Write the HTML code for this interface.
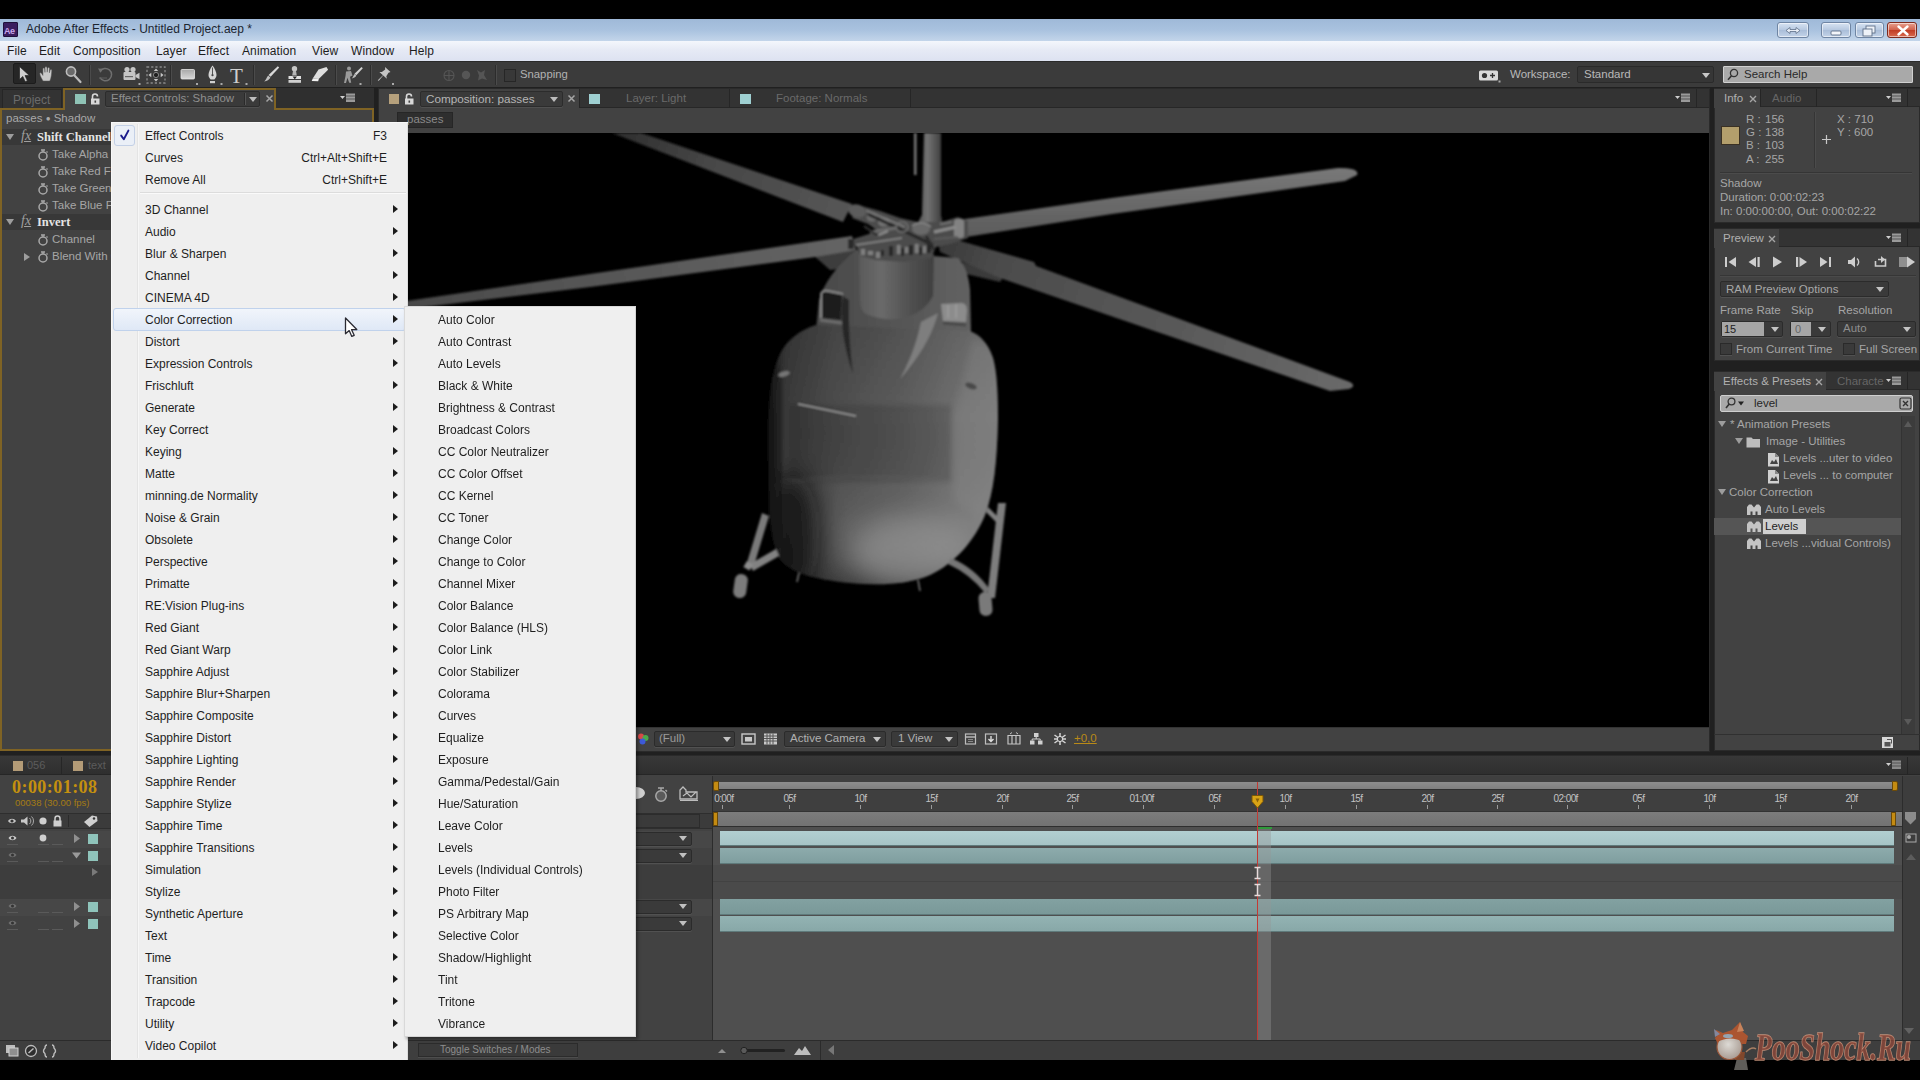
<!DOCTYPE html>
<html><head><meta charset="utf-8"><title>Adobe After Effects - Untitled Project.aep *</title>
<style>
*{box-sizing:border-box;margin:0;padding:0}
html,body{width:1920px;height:1080px;overflow:hidden;background:#000}
body{font-family:"Liberation Sans",sans-serif;font-size:12px;color:#b4b4b4;position:relative;-webkit-font-smoothing:antialiased}
.abs,div,span,i,svg{position:absolute}
#app{left:0;top:19px;width:1920px;height:1041px;background:#202020}
/* title + menubar */
#title{left:0;top:19px;width:1920px;height:22px;background:linear-gradient(#9fb9d8 0%,#a9c2df 50%,#c3d5ea 100%)}
#title .t{left:26px;top:3px;font-size:12.5px;color:#1c2530;white-space:nowrap;letter-spacing:-0.1px}
#menubar{left:0;top:41px;width:1920px;height:20px;background:linear-gradient(#f4f7fc 0%,#e6eaf5 45%,#dde2f1 100%)}
#menubar span{top:2px;font-size:13px;color:#1d1d1d;white-space:nowrap;letter-spacing:-0.2px}
#toolbar{left:0;top:61px;width:1920px;height:26px;background:#3b3b3b;border-top:1px solid #2a2a2a}
.panel{background:#424242}
.lbl{white-space:nowrap;color:#b9b9b9}
/* menus */
#mainmenu,#submenu{left:0;top:0;width:0;height:0}
#mainmenu .bg{left:111px;top:122px;width:297px;height:938px;background:#efefef;border-left:1px solid #d6d6d6;border-top:1px solid #fafafa}
.gutter{left:111px;top:122px;width:297px;height:938px;background:#efefef;box-shadow:inset 1px 1px 0 #f8f8f8, inset -1px 0 0 #dcdcdc}
.gutter:after{content:"";position:absolute;left:26px;top:2px;width:1px;height:934px;background:#e4e4e4;border-right:1px solid #f7f7f7}
.chk{left:114px;top:125px;width:21px;height:21px;background:#eaeff7;border:1px solid #c3d0e6;border-radius:3px}
.chk svg{left:0;top:0}
.mi{left:113px;width:293px;height:22px;font-size:12px;color:#1e1e1e;letter-spacing:0}
.mi span{left:32px;top:6px;white-space:nowrap}
.mi span.sc{left:auto;right:19px}
.mi .ar{left:280px;top:7.500px;width:0;height:0;border-left:5px solid #1c1c1c;border-top:4.5px solid transparent;border-bottom:4.5px solid transparent}
.mi.hl{background:linear-gradient(#f1f5fb,#dfe8f6);border:1px solid #c0d2ec;border-radius:3px;margin-top:1px;height:23px}
.mi.hl span{left:31px;top:4px}
.mi.hl .ar{left:279px;top:6px}
.sep{left:140px;top:192px;width:266px;height:1px;background:#dcdcdc;border-bottom:1px solid #fafafa;height:2px}
.gutter2{left:404px;top:306px;width:232px;height:731px;background:#efefef;box-shadow:inset 1px 1px 0 #d9d9d9, inset -1px -1px 0 #d4d4d4, 2px 2px 3px rgba(0,0,0,.35)}
.si{left:438px;height:22px;font-size:12px;color:#1e1e1e;white-space:nowrap;letter-spacing:0;padding-top:6px}
#wrap{left:0;top:0;width:1920px;height:1080px;overflow:hidden;filter:blur(.55px)}
</style></head><body>

<style>
.aeico{left:3px;top:3px;width:15px;height:15px;background:#3a1d5e;border:1px solid #20103a;border-radius:1px}
.aeico b{left:1px;top:1px;font-size:9px;color:#c9a7ea;letter-spacing:-.5px}
#title .t{font-size:12px;letter-spacing:0}
#menubar span{font-size:12px;letter-spacing:.1px;top:3px}
.wb{top:3px;height:16px;border:1px solid #6f85a3;border-radius:3px;background:linear-gradient(#d7e3f2,#b6c8e0 50%,#a9bdd8 50%,#c3d3e8);box-shadow:inset 0 0 0 1px rgba(255,255,255,.55)}
.wb svg{left:-1px;top:-1px}
.wb.close{background:linear-gradient(#e8a08f,#d0604a 50%,#c03a22 50%,#d8694f);border-color:#7d2a1d}
.tsel{left:13px;top:1px;width:23px;height:21px;background:#262626;border:1px solid #1c1c1c;border-radius:2px}
.dn{width:0;height:0;border-top:5px solid #c8c8c8;border-left:4px solid transparent;border-right:4px solid transparent}
</style>
<style>
.tabrow{background:#2f2f2f}
.tab.off{background:#333;border:1px solid #262626;border-bottom:none}
.dn.s{border-top:6px solid #9d9d9d;border-left:4.500px solid transparent;border-right:4.500px solid transparent}
.rt{width:0;height:0;border-left:6px solid #9d9d9d;border-top:4.500px solid transparent;border-bottom:4.500px solid transparent}
.fx{font-family:"Liberation Serif",serif;font-style:italic;font-size:14px;color:#9f9f9f;text-decoration:underline}
.efn{font-family:"Liberation Serif",serif;font-weight:bold;font-size:12.500px;color:#e4e4e4}
.pr{font-size:11.500px;color:#a6a6a6}
</style>
<style>
.dd{background:#3a3a3a;border:1px solid #2b2b2b;border-radius:2px;box-shadow:0 1px 0 #515151}
</style>
<style>
.rp{background:#424242;border:1px solid #2a2a2a}
.rtabs{background:#333;border-bottom:1px solid #282828}
.rtab.on{background:#424242}
.iv{font-size:11.500px;color:#a6a6a6}
.tr{font-size:11.500px;color:#a6a6a6}
.cb{width:12px;height:12px;background:#3a3a3a;border:1px solid #2a2a2a;box-shadow:0 1px 0 #515151}
</style>

<div id="wrap">
<div id="app"></div>
<div id="title"><div class="aeico"><b>Ae</b></div><div class="t">Adobe After Effects - Untitled Project.aep *</div>
<div class="wb" style="left:1777px;width:32px"><svg width="32" height="17" viewBox="0 0 32 17"><path d="M9 8.5l4-3v2h6v-2l4 3-4 3v-2h-6v2z" fill="#e9eef6" stroke="#5d6f88" stroke-width=".8"/></svg></div>
<div class="wb" style="left:1821px;width:30px"><svg width="30" height="17" viewBox="0 0 30 17"><rect x="10" y="9" width="10" height="4" rx="1" fill="#f2f5fa" stroke="#5d6f88" stroke-width=".9"/></svg></div>
<div class="wb" style="left:1855px;width:29px"><svg width="28" height="17" viewBox="0 0 28 17"><rect x="11" y="4" width="9" height="7" fill="#eef2f8" stroke="#5d6f88" stroke-width=".9"/><rect x="8" y="7" width="9" height="7" fill="#eef2f8" stroke="#5d6f88" stroke-width=".9"/></svg></div>
<div class="wb close" style="left:1887px;width:30px"><svg width="32" height="17" viewBox="0 0 32 17"><path d="M11.5 4.5l9 8M20.5 4.5l-9 8" stroke="#fff" stroke-width="2.4" stroke-linecap="round"/></svg></div>
</div>
<div id="menubar">
<span style="left:7px">File</span><span style="left:39px">Edit</span><span style="left:73px">Composition</span><span style="left:156px">Layer</span><span style="left:198px">Effect</span><span style="left:242px">Animation</span><span style="left:312px">View</span><span style="left:351px">Window</span><span style="left:409px">Help</span>
</div>
<div id="toolbar">
<div class="tsel"></div>
<svg style="left:0;top:0" width="640" height="25" viewBox="0 61 640 25">
<!-- arrow -->
<path d="M19.5 65.5v13l3.3-3 2.4 5.2 2.2-1-2.4-5.1 4.3-.2z" fill="#cfcfcf" stroke="#222" stroke-width=".7"/>
<!-- hand -->
<path d="M43 80c-1-2-3-5-3.2-7.2-.1-1 1.2-1.3 1.8-.4l1.3 2v-6.6c0-1.2 1.7-1.2 1.8 0l.3 3.6v-4.6c0-1.3 1.9-1.3 2 0l.2 4.4.4-3.8c.2-1.2 1.9-1 1.9.2l-.1 4.2.7-2.6c.3-1.1 1.8-.8 1.7.4-.2 3-.5 7.5-2 10.4z" fill="#c9c9c9" stroke="#555" stroke-width=".5"/>
<!-- zoom -->
<circle cx="71" cy="70.5" r="4.6" fill="#6a6a6a" stroke="#bdbdbd" stroke-width="1.6"/><path d="M74.5 74.5l6 6.5" stroke="#bdbdbd" stroke-width="2.2" stroke-linecap="round"/>
<path d="M89.5 64v20" stroke="#2c2c2c"/><path d="M90.5 64v20" stroke="#4b4b4b"/>
<!-- rotate -->
<path d="M100 70.5a6.2 6.2 0 1 1 0 6.2" fill="none" stroke="#6f6f6f" stroke-width="1.5"/><path d="M98 67.5l5 .3-2.4 4z" fill="#6f6f6f"/>
<path d="M99 77l8 0" stroke="#5e5e5e" stroke-width="1"/>
<!-- camera -->
<rect x="123.5" y="71" width="12" height="8" rx="1" fill="#c5c5c5"/><circle cx="127" cy="68.5" r="2.6" fill="#c5c5c5"/><circle cx="133" cy="68.5" r="2.6" fill="#c5c5c5"/><path d="M135.5 74l4-2.2v6.4l-4-2.2z" fill="#c5c5c5"/><rect x="125" y="75" width="8" height="1.2" fill="#666"/><rect x="138.5" y="82" width="2" height="2" fill="#aaa"/>
<!-- pan behind -->
<rect x="147" y="66" width="18" height="16" fill="none" stroke="#8a8a8a" stroke-width="1.3" stroke-dasharray="2.2 2"/><circle cx="156" cy="74" r="2.6" fill="#1e1e1e" stroke="#aaa" stroke-width=".7"/><path d="M156 67.5l2.2 2.6h-4.4zM156 80.5l2.2-2.6h-4.4zM148.5 74l2.8-2.2v4.4zM163.5 74l-2.8-2.2v4.4z" fill="#c8c8c8"/>
<path d="M170.5 64v20" stroke="#2c2c2c"/><path d="M171.5 64v20" stroke="#4b4b4b"/>
<!-- rect -->
<defs><linearGradient id="rg" x1="0" y1="0" x2="0" y2="1"><stop offset="0" stop-color="#a8a8a8"/><stop offset="1" stop-color="#d8d8d8"/></linearGradient></defs>
<rect x="181" y="68.5" width="13.5" height="9.5" rx="1" fill="url(#rg)" stroke="#e6e6e6" stroke-width=".8"/><rect x="196" y="82" width="2" height="2" fill="#aaa"/>
<!-- pen -->
<path d="M212.5 64.5c-2.2 3-4 6.5-4 9.5 0 2 1.4 3.7 2.2 4.6h3.6c.8-.9 2.2-2.600 2.200-4.600 0-3-1.800-6.500-4-9.500z" fill="#d6d6d6"/><path d="M212.500 66.500v7" stroke="#444" stroke-width=".9"/><circle cx="212.500" cy="74.200" r="1.100" fill="#444"/><rect x="210" y="80" width="5" height="2.200" fill="#d0d0d0"/><rect x="220.500" y="82" width="2" height="2" fill="#aaa"/>
<!-- T -->
<text x="230" y="81.500" font-family="Liberation Serif" font-size="21" fill="#cfcfcf">T</text><rect x="245.500" y="82" width="2" height="2" fill="#aaa"/>
<path d="M253.500 64v20" stroke="#2c2c2c"/><path d="M254.500 64v20" stroke="#4b4b4b"/>
<!-- brush -->
<path d="M277.800 65.200l1.400 1.300-8.600 9.300-2-1.800z" fill="#d8d8d8"/><path d="M268.200 74.500l2.200 2c-1 2.300-3.600 3.800-6.200 3.900 1.800-1.500 2.400-3.800 4-5.900z" fill="#c2c2c2"/>
<!-- stamp -->
<circle cx="294.500" cy="67.800" r="2.700" fill="#c6c6c6"/><path d="M293 70h3l.8 4.500h-4.600z" fill="#b5b5b5"/><rect x="288.500" y="75" width="12.500" height="3" fill="#e0e0e0"/><rect x="288.500" y="79" width="12.500" height="2.800" fill="#d0d0d0"/><path d="M292.500 75.500h4.500l-2.200 2.800z" fill="#222"/>
<!-- eraser -->
<path d="M318.500 68.500l8-2.600 1.600 2.800-9.400 9.300-6-.4z" fill="#dedede"/><path d="M312.800 77.500l6 .4-.6 2.400-6.500-.3z" fill="#f2f2f2"/>
<path d="M335.500 64v20" stroke="#2c2c2c"/><path d="M336.500 64v20" stroke="#4b4b4b"/>
<!-- roto -->
<circle cx="349" cy="67.500" r="2" fill="#9a9a9a"/><path d="M346 70.500l5-.5 1.500 4.500-2.500 1.200 1.200 6h-2l-1.800-5-1.400 5.200h-2l1.500-7z" fill="#9a9a9a"/><path d="M361.500 66l1.300 1.200-6.500 7-1.800-1.500z" fill="#d2d2d2"/><path d="M354.500 73l1.800 1.600c-.8 1.800-2.600 2.700-4.600 2.800 1.400-1.200 1.700-2.800 2.800-4.400z" fill="#bdbdbd"/><rect x="359.500" y="82" width="2" height="2" fill="#aaa"/>
<path d="M370.500 64v20" stroke="#2c2c2c"/><path d="M371.500 64v20" stroke="#4b4b4b"/>
<!-- pin -->
<path d="M385 66l5.500 5-2 .8-2.200 3.500.6 2.400-3.700-3.300-4.200 5-1.200.6.500-1.300 4.700-4.500-3.600-3.300 2.500.2 3.300-2.500z" fill="#c4c4c4"/><rect x="392" y="82" width="2" height="2" fill="#aaa"/>
<!-- dim icons -->
<g fill="none" stroke="#555" stroke-width="1.100"><circle cx="449" cy="74.500" r="5"/><path d="M449 69.500v10M444 74.500h10"/></g>
<circle cx="466" cy="74" r="4.200" fill="#555"/>
<path d="M477 69l4 2.500 4-2.500-1 5 3 5-5-1.500-4 2 1-5z" fill="#555"/>
<path d="M495.500 64v20" stroke="#2c2c2c"/><path d="M496.500 64v20" stroke="#4b4b4b"/>
<rect x="504.500" y="68.500" width="11" height="12" fill="#383838" stroke="#262626"/>
</svg>
<div class="lbl" style="left:520px;top:6px;font-size:11.3px;color:#b2b2b2">Snapping</div>
<!-- right side -->
<svg style="left:1476px;top:4px" width="30" height="20" viewBox="0 0 30 20"><rect x="3" y="4.500" width="19" height="10" rx="1.500" fill="#d9d9d9"/><circle cx="8.500" cy="9.500" r="2.600" fill="#333"/><path d="M14 9.500h5M16.500 7v5" stroke="#333" stroke-width="1.300"/><rect x="22.500" y="14.500" width="2" height="2" fill="#aaa"/></svg>
<div class="lbl" style="left:1510px;top:6px;font-size:11.5px">Workspace:</div>
<div style="left:1577px;top:4px;width:137px;height:17px;background:#363636;border:1px solid #2a2a2a;border-radius:2px"></div>
<div class="lbl" style="left:1584px;top:6px;font-size:11.5px">Standard</div>
<i class="dn" style="left:1702px;top:11px"></i>
<div style="left:1723px;top:4px;width:190px;height:17px;background:#a9a9a9;border:1px solid #d0d0d0;border-radius:1px"></div>
<svg style="left:1725px;top:5px" width="16" height="16" viewBox="0 0 16 16"><circle cx="9" cy="6" r="3.600" fill="none" stroke="#333" stroke-width="1.300"/><path d="M6.500 8.800l-3.500 4" stroke="#333" stroke-width="1.600"/></svg>
<div class="lbl" style="left:1744px;top:6px;font-size:11.5px;color:#2a2a2a">Search Help</div>
</div>

<!-- LEFT: project / effect controls -->
<div id="leftp">
<div class="tabrow" style="left:0;top:88px;width:374px;height:20px"></div>
<div class="tab off" style="left:2px;top:89px;width:60px;height:19px"><span class="lbl" style="left:10px;top:3px;color:#6b6b6b">Project</span></div>
<div id="lpbody" style="left:0;top:108px;width:374px;height:643px;background:#424242;border:2px solid #7f6324;border-top-width:2px"></div>
<div id="lptab" style="left:63px;top:88px;width:213px;height:22px;background:#424242;border:2px solid #7f6324;border-bottom:none"></div>
<div style="left:75px;top:94px;width:11px;height:10px;background:#8fc3b6"></div>
<svg style="left:90px;top:93px" width="11" height="12" viewBox="0 0 11 12"><path d="M2.5 6V3.500a2.500 2.500 0 0 1 5 0" fill="none" stroke="#d8d8d8" stroke-width="1.600"/><rect x="1" y="5.500" width="8.500" height="6" fill="#d8d8d8"/><rect x="4.500" y="7.500" width="1.600" height="2.200" fill="#444"/></svg>
<div style="left:105px;top:91px;width:155px;height:16px;background:#3a3a3a;border:1px solid #2c2c2c;border-radius:2px;box-shadow:0 1px 0 #505050"></div>
<span class="lbl" style="left:111px;top:92px;font-size:11.5px;color:#8f8f8f">Effect Controls: Shadow</span>
<div style="left:244px;top:93px;width:1px;height:12px;background:#2a2a2a;border-right:1px solid #555;width:2px"></div>
<i class="dn" style="left:249px;top:97px;border-top-color:#bdbdbd"></i>
<svg style="left:265px;top:94px" width="9" height="9" viewBox="0 0 9 9"><path d="M1.500 1.500l6 6M7.500 1.500l-6 6" stroke="#a5a5a5" stroke-width="1.500"/></svg>
<svg class="pm" style="left:340px;top:93px" width="16" height="10" viewBox="0 0 16 10"><path d="M0 3h5l-2.500 3z" fill="#cfcfcf"/><rect x="6" y="0.500" width="9" height="8.500" fill="#9a9a9a"/><path d="M6 3h9M6 6h9" stroke="#555" stroke-width="1"/></svg>
<span class="lbl" style="left:6px;top:112px;font-size:11.5px;color:#a9a9a9">passes <b style="position:static;font-size:8px;vertical-align:1px">●</b> Shadow</span>
<!-- fx rows -->
<div style="left:2px;top:129px;width:370px;height:16px;background:#383838"></div>
<div style="left:2px;top:214px;width:370px;height:16px;background:#383838"></div>
<i class="dn s" style="left:6px;top:134px"></i><i class="dn s" style="left:6px;top:219px"></i>
<span class="fx" style="left:21px;top:128px">fx</span><span class="fx" style="left:21px;top:213px">fx</span>
<span class="lbl efn" style="left:37px;top:130px">Shift Channels</span>
<span class="lbl efn" style="left:37px;top:215px">Invert</span>
<span class="lbl pr" style="left:52px;top:148px">Take Alpha From</span>
<span class="lbl pr" style="left:52px;top:165px">Take Red From</span>
<span class="lbl pr" style="left:52px;top:182px">Take Green From</span>
<span class="lbl pr" style="left:52px;top:199px">Take Blue From</span>
<span class="lbl pr" style="left:52px;top:233px">Channel</span>
<span class="lbl pr" style="left:52px;top:250px">Blend With Original</span>
<i class="rt" style="left:24px;top:253px"></i>
<svg style="left:36px;top:148px" width="14" height="120" viewBox="0 0 14 120">
<defs><g id="sw"><circle cx="7" cy="8" r="4" fill="none" stroke="#a8a8a8" stroke-width="1.500"/><path d="M5 2h4M7 2v2M10.500 3.500l1 1" stroke="#a8a8a8" stroke-width="1.300"/></g></defs>
<use href="#sw" y="0"/><use href="#sw" y="17"/><use href="#sw" y="34"/><use href="#sw" y="51"/><use href="#sw" y="85"/><use href="#sw" y="102"/></svg>
</div>

<!-- COMP PANEL -->
<div id="compp" style="left:378px;top:88px;width:1332px;height:664px;background:#424242;border:1px solid #2a2a2a"></div>
<div class="tabrow" style="left:379px;top:89px;width:1330px;height:19px;background:#333;border-bottom:1px solid #272727"></div>
<div style="left:379px;top:89px;width:200px;height:20px;background:#424242"></div>
<div style="left:389px;top:94px;width:10px;height:10px;background:#b5a07c"></div>
<svg style="left:404px;top:93px" width="11" height="12" viewBox="0 0 11 12"><path d="M2.500 6V3.500a2.500 2.500 0 0 1 5 0" fill="none" stroke="#d8d8d8" stroke-width="1.600"/><rect x="1" y="5.500" width="8.500" height="6" fill="#d8d8d8"/><rect x="4.500" y="7.500" width="1.600" height="2.200" fill="#444"/></svg>
<div style="left:420px;top:91px;width:143px;height:16px;background:#3a3a3a;border:1px solid #2c2c2c;border-radius:2px;box-shadow:0 1px 0 #505050"></div>
<span class="lbl" style="left:426px;top:92px;font-size:11.700px;color:#b5b5b5">Composition: passes</span>
<i class="dn" style="left:550px;top:97px;border-top-color:#bdbdbd"></i>
<svg style="left:567px;top:94px" width="9" height="9" viewBox="0 0 9 9"><path d="M1.500 1.500l6 6M7.500 1.500l-6 6" stroke="#a5a5a5" stroke-width="1.500"/></svg>
<div style="left:579px;top:89px;width:1px;height:19px;background:#262626"></div>
<div style="left:589px;top:94px;width:11px;height:10px;background:#9fd0d2"></div>
<span class="lbl" style="left:626px;top:92px;font-size:11.500px;color:#6a6a6a">Layer: Light</span>
<div style="left:729px;top:89px;width:1px;height:19px;background:#262626"></div>
<div style="left:740px;top:94px;width:11px;height:10px;background:#9fd0d2"></div>
<span class="lbl" style="left:776px;top:92px;font-size:11.500px;color:#6a6a6a">Footage: Normals</span>
<div style="left:910px;top:89px;width:1px;height:19px;background:#262626"></div>
<svg class="pm" style="left:1675px;top:93px" width="16" height="10" viewBox="0 0 16 10"><path d="M0 3h5l-2.500 3z" fill="#cfcfcf"/><rect x="6" y="0.500" width="9" height="8.500" fill="#9a9a9a"/><path d="M6 3h9M6 6h9" stroke="#555" stroke-width="1"/></svg>
<div style="left:1696px;top:89px;width:1px;height:19px;background:#262626"></div>
<!-- passes button -->
<div style="left:397px;top:112px;width:56px;height:16px;background:#2e2e2e;border:1px solid #262626"></div>
<span class="lbl" style="left:407px;top:113px;font-size:11.500px;color:#8a8a8a">passes</span>
<!-- viewer -->
<div id="viewer" style="left:379px;top:133px;width:1330px;height:594px;background:#000;overflow:hidden">
<svg style="left:0;top:0" width="1330" height="594" viewBox="379 133 1330 594">
<defs>
<linearGradient id="bodyH" x1="768" y1="0" x2="998" y2="0" gradientUnits="userSpaceOnUse"><stop offset="0" stop-color="#1c1c1c"/><stop offset=".08" stop-color="#3a3a3a"/><stop offset=".3" stop-color="#4e4e4e"/><stop offset=".6" stop-color="#5e5e5e"/><stop offset=".82" stop-color="#707070"/><stop offset="1" stop-color="#787878"/></linearGradient>
<linearGradient id="bodyV" x1="0" y1="325" x2="0" y2="585" gradientUnits="userSpaceOnUse"><stop offset="0" stop-color="#000" stop-opacity=".12"/><stop offset=".35" stop-color="#000" stop-opacity="0"/><stop offset=".75" stop-color="#fff" stop-opacity=".08"/><stop offset="1" stop-color="#000" stop-opacity=".25"/></linearGradient>
<radialGradient id="noseHi" cx="905" cy="560" r="95" gradientUnits="userSpaceOnUse"><stop offset="0" stop-color="#8e8e8e" stop-opacity=".85"/><stop offset="1" stop-color="#8e8e8e" stop-opacity="0"/></radialGradient>
<radialGradient id="noseLo" cx="790" cy="545" r="75" gradientUnits="userSpaceOnUse"><stop offset="0" stop-color="#161616" stop-opacity=".9"/><stop offset="1" stop-color="#161616" stop-opacity="0"/></radialGradient>
<linearGradient id="cowl" x1="818" y1="0" x2="970" y2="0" gradientUnits="userSpaceOnUse"><stop offset="0" stop-color="#4a4a4a"/><stop offset=".5" stop-color="#545454"/><stop offset="1" stop-color="#626262"/></linearGradient>
<linearGradient id="cyl" x1="859" y1="0" x2="933" y2="0" gradientUnits="userSpaceOnUse"><stop offset="0" stop-color="#5a5a5a"/><stop offset=".3" stop-color="#6a6a6a"/><stop offset=".7" stop-color="#505050"/><stop offset="1" stop-color="#404040"/></linearGradient>
<linearGradient id="mast" x1="920" y1="0" x2="942" y2="0" gradientUnits="userSpaceOnUse"><stop offset="0" stop-color="#5c5c5c"/><stop offset=".35" stop-color="#727272"/><stop offset="1" stop-color="#3c3c3c"/></linearGradient>
<linearGradient id="b1" x1="615" y1="133" x2="850" y2="212" gradientUnits="userSpaceOnUse"><stop offset="0" stop-color="#2e2e2e"/><stop offset=".4" stop-color="#474747"/><stop offset="1" stop-color="#565656"/></linearGradient>
<linearGradient id="b2" x1="409" y1="300" x2="850" y2="245" gradientUnits="userSpaceOnUse"><stop offset="0" stop-color="#4a4a4a"/><stop offset=".5" stop-color="#585858"/><stop offset="1" stop-color="#646464"/></linearGradient>
<linearGradient id="b3" x1="0" y1="165" x2="0" y2="240" gradientUnits="userSpaceOnUse"><stop offset="0" stop-color="#7a7a7a"/><stop offset="1" stop-color="#5a5a5a"/></linearGradient>
<linearGradient id="b4" x1="940" y1="245" x2="1353" y2="387" gradientUnits="userSpaceOnUse"><stop offset="0" stop-color="#3a3a3a"/><stop offset=".15" stop-color="#4c4c4c"/><stop offset=".6" stop-color="#5a5a5a"/><stop offset="1" stop-color="#6a6a6a"/></linearGradient>
<filter id="bl1"><feGaussianBlur stdDeviation="1"/></filter>
<filter id="bl4"><feGaussianBlur stdDeviation="4"/></filter><filter id="bl2"><feGaussianBlur stdDeviation="2.5"/></filter>
<filter id="bl6"><feGaussianBlur stdDeviation="6"/></filter><filter id="bl12" x="-50%" y="-50%" width="200%" height="200%"><feGaussianBlur stdDeviation="13"/></filter>
<clipPath id="bodyclip"><path d="M816 325C800 330 786 340 779 356C771 375 768 400 768 440L769 500C770 530 774 548 781 560C792 574 820 580 850 583C880 586 910 584 930 575C955 563 975 540 985 515C994 492 997 460 998 420C998 395 997 372 993 358C988 343 980 335 970 331Z"/></clipPath>
</defs>
<g filter="url(#bl1)">
<!-- rear shadow blades -->
<path d="M812 254L858 250L862 266L830 270Z" fill="#3c3c3c"/>
<path d="M962 262L1004 276L1000 282L966 274Z" fill="#3a3a3a"/>
<!-- blade 1 upper-left -->
<path d="M612 133L641 133L852 204L843 222Z" fill="url(#b1)"/>
<!-- blade 2 lower-left -->
<path d="M400 302L590 274L852 236L856 250L815 257L590 287L400 310Z" fill="url(#b2)"/>
<!-- blade 4 lower-right -->
<path d="M938 241L950 238L1034 262L1036 266L1350 382Q1357 386 1349 389L1330 391L1000 278L940 252Z" fill="url(#b4)"/>
<!-- blade 3 upper-right -->
<path d="M958 220L1112 198L1338 168Q1360 168 1357 175L1345 181L1112 214L966 237Z" fill="url(#b3)"/>
<!-- mast -->
<rect x="914" y="133" width="2.500" height="42" fill="#7c7c7c"/>
<path d="M924 133L941 133L941 215L943 224L917 224L922 215Z" fill="url(#mast)"/>
<!-- cowl -->
<path d="M856 250L958 258Q968 268 970 290L971 336L816 330L819 300Q826 275 856 250Z" fill="url(#cowl)"/>
<!-- main body -->
<path d="M816 325C800 330 786 340 779 356C771 375 768 400 768 440L769 500C770 530 774 548 781 560C792 574 820 580 850 583C880 586 910 584 930 575C955 563 975 540 985 515C994 492 997 460 998 420C998 395 997 372 993 358C988 343 980 335 970 331Z" fill="url(#bodyH)"/>
<path d="M816 325C800 330 786 340 779 356C771 375 768 400 768 440L769 500C770 530 774 548 781 560C792 574 820 580 850 583C880 586 910 584 930 575C955 563 975 540 985 515C994 492 997 460 998 420C998 395 997 372 993 358C988 343 980 335 970 331Z" fill="url(#bodyV)"/>
<g clip-path="url(#bodyclip)">
<rect x="789" y="405" width="162" height="77" fill="#000" opacity=".13" filter="url(#bl2)"/>
<path d="M972 338L1002 350L1002 470L985 522L953 500L953 415L962 385Z" fill="#909090" opacity=".30" filter="url(#bl4)"/>
<ellipse cx="912" cy="552" rx="62" ry="34" fill="#9a9a9a" opacity=".62" filter="url(#bl12)"/>
<ellipse cx="790" cy="535" rx="30" ry="60" fill="#0c0c0c" opacity=".8" filter="url(#bl12)"/>
<ellipse cx="770" cy="450" rx="10" ry="90" fill="#0c0c0c" opacity=".6" filter="url(#bl6)"/>
<path d="M790 482Q870 470 950 482" fill="none" stroke="#777" stroke-width="1.500" opacity=".5" filter="url(#bl2)"/>
</g>
<!-- scoops -->
<path d="M821 293Q822 290 828 291L842 294L841 320L822 318Z" fill="#1c1c1c"/><path d="M821 318V294Q822 290 828 291L843 294" fill="none" stroke="#8a8a8a" stroke-width="2"/><path d="M820 320L842 323" stroke="#6f6f6f" stroke-width="2.500"/>
<path d="M941 304L962 303Q967 304 967 310L966 322L943 321Z" fill="#8c8c8c"/><path d="M943 323L966 325" stroke="#4a4a4a" stroke-width="3"/><path d="M948 305V318M956 304V318" stroke="#a5a5a5" stroke-width="1"/>
<!-- fins -->
<path d="M843 296Q838 330 853 374Q848 335 849 300Z" fill="#262626"/>
<path d="M938 313Q930 345 900 379Q915 352 921 322Z" fill="#7e7e7e"/>
<!-- cylinder -->
<path d="M859 254L934 254L933 296Q925 312 905 318Q885 322 866 314Q860 310 860 300Z" fill="url(#cyl)"/>
<!-- hub cluster -->
<path d="M858 205L880 211L900 218L918 222L942 222L958 217L968 221L968 238L950 244L936 247L931 258L905 262L875 260L861 256L856 246L850 240L866 235L878 231L868 224L852 218Z" fill="#4c4c4c"/>
<ellipse cx="857" cy="211" rx="9" ry="6.500" fill="#5c5c5c" transform="rotate(18 857 211)"/>
<ellipse cx="872" cy="217" rx="5.500" ry="4.500" fill="#6c6c6c"/>
<ellipse cx="884" cy="222" rx="6" ry="4.500" fill="#747474"/>
<path d="M868 214L933 245" stroke="#262626" stroke-width="3.200"/>
<path d="M866 210.500L905 227" stroke="#808080" stroke-width="1.600"/>
<ellipse cx="902" cy="227" rx="6" ry="5" fill="none" stroke="#6e6e6e" stroke-width="1.600"/>
<ellipse cx="921" cy="229" rx="9" ry="6" fill="#696969"/>
<path d="M912 226Q921 219 931 227" fill="none" stroke="#8a8a8a" stroke-width="1.400"/>
<rect x="954" y="219" width="10" height="19" rx="3" fill="#828282"/>
<path d="M934 232L956 227" stroke="#8c8c8c" stroke-width="3.200"/>
<path d="M934 239L958 237" stroke="#5c5c5c" stroke-width="2.200"/>
<path d="M940 224L952 222" stroke="#6a6a6a" stroke-width="3"/>
<rect x="848" y="239" width="6" height="10" fill="#2a2a2a"/>
<path d="M856 245L902 238" stroke="#8a8a8a" stroke-width="1.600"/>
<path d="M870 232L896 228" stroke="#6c6c6c" stroke-width="3"/>
<path d="M876 236L888 231" stroke="#8e8e8e" stroke-width="2.400"/>
<path d="M864 226L878 236" stroke="#2e2e2e" stroke-width="2.400"/>
<g fill="#808080"><rect x="861" y="249" width="4" height="6"/><rect x="868" y="251" width="5" height="4"/><rect x="876" y="252" width="4" height="6"/><rect x="897" y="245" width="3.500" height="9"/><rect x="905" y="247" width="3" height="6"/><rect x="915" y="244" width="3.500" height="9"/><rect x="923" y="246" width="3" height="7"/></g>
<g fill="#262626"><rect x="889" y="246" width="4" height="10"/><rect x="901" y="248" width="3" height="8"/><rect x="909" y="245" width="4" height="10"/><rect x="919" y="247" width="3" height="8"/><rect x="927" y="243" width="4" height="10"/><rect x="881" y="250" width="3" height="6"/></g>
<path d="M926 236L934 250" stroke="#2a2a2a" stroke-width="3"/>
<!-- body details -->
<path d="M798 404L856 416" stroke="#9a9a9a" stroke-width="1.500"/>
<ellipse cx="784" cy="374" rx="6" ry="2.500" fill="#777" transform="rotate(-15 784 374)"/>
<ellipse cx="971" cy="386" rx="6" ry="3" fill="#484848" transform="rotate(20 971 386)"/>
<!-- skids left -->
<path d="M762 513L769 516L753 569L746 566Z" fill="#7a7a7a"/>
<path d="M776 549L779 556L753 571L750 564Z" fill="#828282"/>
<rect x="734" y="574" width="13" height="24" rx="6" fill="#7c7c7c" transform="rotate(8 740 586)"/>
<rect x="745" y="562" width="7" height="7" fill="#8d8d8d" transform="rotate(30 748 565)"/>
<!-- skids right -->
<path d="M998 503L1006 503L995 598L987 598Z" fill="#7e7e7e"/>
<path d="M988 507L1002 521L1000 526L986 512Z" fill="#808080"/>
<path d="M951 558Q975 568 990 590L985 593Q970 574 948 564Z" fill="#767676"/>
<rect x="979" y="592" width="13" height="24" rx="6" fill="#7a7a7a" transform="rotate(-5 985 604)"/>
<!-- small antennas -->
<path d="M799 573L797 582M918 580L920 591" stroke="#7a7a7a" stroke-width="1.500"/>
</g>
</svg>

</div>
<!-- footer -->
<div style="left:379px;top:727px;width:1330px;height:24px;background:#424242;border-top:1px solid #333"></div>
<svg style="left:636px;top:732px" width="14" height="14" viewBox="0 0 14 14"><circle cx="5" cy="4.500" r="3" fill="#d84a4a"/><circle cx="9.500" cy="6" r="3" fill="#4aa84a"/><circle cx="6.500" cy="9.500" r="3" fill="#3d5ad8"/></svg>
<div class="dd" style="left:654px;top:731px;width:81px;height:16px"></div><span class="lbl" style="left:659px;top:732px;font-size:11.500px;color:#9a9a9a">(Full)</span><i class="dn" style="left:723px;top:737px;border-top-color:#c4c4c4"></i>
<svg style="left:741px;top:732px" width="40" height="14" viewBox="0 0 40 14"><rect x="1" y="2" width="13" height="10" fill="none" stroke="#c9c9c9" stroke-width="1.400"/><rect x="4" y="5" width="7" height="4.500" fill="#c9c9c9"/><rect x="23" y="1.500" width="13" height="11" fill="#c9c9c9"/><path d="M23 4h13M23 6.500h13M23 9h13M26 1.500v11M29 1.500v11M32 1.500v11" stroke="#555" stroke-width="1"/></svg>
<div class="dd" style="left:784px;top:731px;width:102px;height:16px"></div><span class="lbl" style="left:790px;top:732px;font-size:11.500px;color:#b0b0b0">Active Camera</span><i class="dn" style="left:873px;top:737px;border-top-color:#c4c4c4"></i>
<div class="dd" style="left:891px;top:731px;width:67px;height:16px"></div><span class="lbl" style="left:898px;top:732px;font-size:11.500px;color:#b0b0b0">1 View</span><i class="dn" style="left:945px;top:737px;border-top-color:#c4c4c4"></i>
<svg style="left:963px;top:731px" width="110" height="16" viewBox="0 0 110 16">
<rect x="2.500" y="3" width="10" height="10" fill="none" stroke="#bdbdbd" stroke-width="1.200"/><path d="M2.500 6h10" stroke="#bdbdbd" stroke-width="1.400"/><path d="M5 8.500h5M5 10.500h5" stroke="#8a8a8a"/>
<rect x="22.500" y="3" width="11" height="10" fill="none" stroke="#bdbdbd" stroke-width="1.200"/><path d="M28 5v5M25.500 8l2.500 2.500L30.500 8" stroke="#e0e0e0" stroke-width="1.400" fill="none"/>
<path d="M45 4.500h12v8.500h-12zM49 4.500v8.500M53 4.500v8.500" fill="none" stroke="#c4c4c4" stroke-width="1.200"/><path d="M47 3l2-1.500M55 3l-2-1.500" stroke="#c4c4c4"/>
<rect x="71" y="2" width="4.500" height="4" fill="#d0d0d0"/><rect x="67" y="9.500" width="4.500" height="4" fill="#d0d0d0"/><rect x="75" y="9.500" width="4.500" height="4" fill="#d0d0d0"/><path d="M73.200 6v2M69.200 9.500v-1.500h8v1.500" stroke="#d0d0d0" fill="none"/>
<g stroke="#d6d6d6" stroke-width="1.500"><path d="M97 2v12M91.500 4l11 8M102.500 4l-11 8M91 8h12"/></g><circle cx="97" cy="8" r="2.600" fill="#444" stroke="#ddd"/>
</svg>
<span class="lbl" style="left:1074px;top:732px;font-size:11.500px;color:#b98a17;text-decoration:underline">+0,0</span>

<!-- RIGHT PANELS -->
<div class="rp" style="left:1714px;top:88px;width:206px;height:135px"></div>
<div class="rtabs" style="left:1714px;top:89px;width:206px;height:18px"></div>
<div class="rtab on" style="left:1714px;top:89px;width:46px;height:19px"></div>
<span class="lbl" style="left:1724px;top:92px;font-size:11.500px;color:#b0b0b0">Info</span>
<svg style="left:1749px;top:95px" width="8" height="8" viewBox="0 0 8 8"><path d="M1 1l6 6M7 1l-6 6" stroke="#a5a5a5" stroke-width="1.400"/></svg>
<div style="left:1760px;top:89px;width:1px;height:18px;background:#252525"></div>
<span class="lbl" style="left:1772px;top:92px;font-size:11.500px;color:#666">Audio</span>
<div style="left:1816px;top:89px;width:1px;height:18px;background:#252525"></div>
<svg class="pm" style="left:1886px;top:93px" width="16" height="10" viewBox="0 0 16 10"><path d="M0 3h5l-2.500 3z" fill="#cfcfcf"/><rect x="6" y="0.500" width="9" height="8.500" fill="#9a9a9a"/><path d="M6 3h9M6 6h9" stroke="#555" stroke-width="1"/></svg>
<div style="left:1907px;top:89px;width:1px;height:18px;background:#252525"></div>
<div style="left:1721px;top:126px;width:19px;height:19px;background:#b39f6c;border:1px solid #3a3124"></div>
<span class="lbl iv" style="left:1746px;top:113px">R :</span><span class="lbl iv" style="left:1765px;top:113px">156</span>
<span class="lbl iv" style="left:1746px;top:126px">G :</span><span class="lbl iv" style="left:1765px;top:126px">138</span>
<span class="lbl iv" style="left:1746px;top:139px">B :</span><span class="lbl iv" style="left:1765px;top:139px">103</span>
<span class="lbl iv" style="left:1746px;top:153px">A :</span><span class="lbl iv" style="left:1765px;top:153px">255</span>
<div style="left:1814px;top:112px;width:1px;height:56px;background:#353535;border-right:1px solid #4b4b4b;width:2px"></div>
<span class="lbl iv" style="left:1837px;top:113px">X : 710</span><span class="lbl iv" style="left:1837px;top:126px">Y : 600</span>
<svg style="left:1821px;top:134px" width="11" height="11" viewBox="0 0 11 11"><path d="M5.500 1v9M1 5.500h9" stroke="#c8c8c8" stroke-width="1.200"/></svg>
<div style="left:1720px;top:172px;width:192px;height:2px;background:#353535;border-bottom:1px solid #4b4b4b"></div>
<span class="lbl iv" style="left:1720px;top:177px">Shadow</span>
<span class="lbl iv" style="left:1720px;top:191px">Duration: 0:00:02:23</span>
<span class="lbl iv" style="left:1720px;top:205px">In: 0:00:00:00, Out: 0:00:02:22</span>
<!-- Preview -->
<div class="rp" style="left:1714px;top:228px;width:206px;height:133px"></div>
<div class="rtabs" style="left:1714px;top:229px;width:206px;height:18px"></div>
<div class="rtab on" style="left:1714px;top:229px;width:65px;height:19px"></div>
<span class="lbl" style="left:1723px;top:232px;font-size:11.500px;color:#b0b0b0">Preview</span>
<svg style="left:1768px;top:235px" width="8" height="8" viewBox="0 0 8 8"><path d="M1 1l6 6M7 1l-6 6" stroke="#a5a5a5" stroke-width="1.400"/></svg>
<svg class="pm" style="left:1886px;top:233px" width="16" height="10" viewBox="0 0 16 10"><path d="M0 3h5l-2.500 3z" fill="#cfcfcf"/><rect x="6" y="0.500" width="9" height="8.500" fill="#9a9a9a"/><path d="M6 3h9M6 6h9" stroke="#555" stroke-width="1"/></svg>
<div style="left:1907px;top:229px;width:1px;height:18px;background:#252525"></div>
<svg style="left:1714px;top:252px" width="206" height="20" viewBox="1714 252 206 20" fill="#cdcdcd">
<rect x="1725" y="257" width="2" height="10"/><path d="M1736 257v10l-7.500-5z"/>
<path d="M1756 257v10l-7.500-5z"/><rect x="1757.500" y="257" width="2.200" height="10"/>
<path d="M1773 256.500v11l9-5.500z"/>
<rect x="1796" y="257" width="2.200" height="10"/><path d="M1799.500 257v10l7.500-5z"/>
<path d="M1820 257v10l7.500-5z"/><rect x="1829" y="257" width="2" height="10"/>
<path d="M1848 260h3l4-3.500v11l-4-3.500h-3z"/><path d="M1857 258.500a4.500 4.500 0 0 1 0 7" fill="none" stroke="#cdcdcd" stroke-width="1.400"/>
<path d="M1875.500 259.500h10v6.500h-10z" fill="none" stroke="#cdcdcd" stroke-width="1.600"/><path d="M1881 256l4 3.500-4 3.500z"/><rect x="1874" y="258" width="4" height="3" fill="#424242"/>
<rect x="1899" y="257" width="8" height="10" fill="#8f8f8f"/><path d="M1907 256.500v11l8-5.500z"/>
</svg>
<div style="left:1720px;top:275px;width:196px;height:1px;background:#363636;border-bottom:1px solid #4a4a4a;height:2px"></div>
<div class="dd" style="left:1720px;top:281px;width:169px;height:16px"></div><span class="lbl" style="left:1726px;top:283px;font-size:11.500px;color:#a8a8a8">RAM Preview Options</span><i class="dn" style="left:1876px;top:287px;border-top-color:#c4c4c4"></i>
<span class="lbl iv" style="left:1720px;top:304px">Frame Rate</span><span class="lbl iv" style="left:1791px;top:304px">Skip</span><span class="lbl iv" style="left:1838px;top:304px">Resolution</span>
<div class="dd" style="left:1721px;top:321px;width:62px;height:16px"></div><div style="left:1722px;top:322px;width:42px;height:14px;background:#a6a6a6"></div><span class="lbl" style="left:1724px;top:323px;font-size:11px;color:#222">15</span><i class="dn" style="left:1771px;top:327px;border-top-color:#c4c4c4"></i>
<div class="dd" style="left:1790px;top:321px;width:41px;height:16px"></div><div style="left:1791px;top:322px;width:20px;height:14px;background:#a6a6a6"></div><span class="lbl" style="left:1795px;top:323px;font-size:11px;color:#666">0</span><i class="dn" style="left:1818px;top:327px;border-top-color:#c4c4c4"></i>
<div class="dd" style="left:1837px;top:321px;width:79px;height:16px"></div><span class="lbl" style="left:1843px;top:322px;font-size:11.500px;color:#8f8f8f">Auto</span><i class="dn" style="left:1903px;top:327px;border-top-color:#c4c4c4"></i>
<div class="cb" style="left:1720px;top:343px"></div><span class="lbl iv" style="left:1736px;top:343px">From Current Time</span>
<div class="cb" style="left:1843px;top:343px"></div><span class="lbl iv" style="left:1859px;top:343px">Full Screen</span>
<!-- Effects & Presets -->
<div class="rp" style="left:1714px;top:371px;width:206px;height:380px"></div>
<div class="rtabs" style="left:1714px;top:372px;width:206px;height:18px"></div>
<div class="rtab on" style="left:1714px;top:372px;width:112px;height:19px"></div>
<span class="lbl" style="left:1723px;top:375px;font-size:11.500px;color:#b0b0b0">Effects &amp; Presets</span>
<svg style="left:1815px;top:378px" width="8" height="8" viewBox="0 0 8 8"><path d="M1 1l6 6M7 1l-6 6" stroke="#a5a5a5" stroke-width="1.400"/></svg>
<span class="lbl" style="left:1837px;top:375px;font-size:11.500px;color:#666">Characte</span>
<svg class="pm" style="left:1886px;top:376px" width="16" height="10" viewBox="0 0 16 10"><path d="M0 3h5l-2.500 3z" fill="#cfcfcf"/><rect x="6" y="0.500" width="9" height="8.500" fill="#9a9a9a"/><path d="M6 3h9M6 6h9" stroke="#555" stroke-width="1"/></svg>
<div style="left:1907px;top:372px;width:1px;height:18px;background:#252525"></div>
<div style="left:1720px;top:395px;width:193px;height:17px;background:#a9a9a9;border:1px solid #cfcfcf;border-radius:2px"></div>
<svg style="left:1723px;top:396px" width="26" height="15" viewBox="0 0 26 15"><circle cx="8.500" cy="5.500" r="3.400" fill="none" stroke="#333" stroke-width="1.300"/><path d="M6.200 8l-3.200 4" stroke="#333" stroke-width="1.600"/><path d="M15 5.500h6l-3 4z" fill="#222"/></svg>
<span class="lbl" style="left:1754px;top:397px;font-size:11.500px;color:#262626">level</span>
<svg style="left:1899px;top:397px" width="13" height="13" viewBox="0 0 13 13"><rect x="1" y="1" width="11" height="11" rx="1.500" fill="#a9a9a9" stroke="#333" stroke-width="1.200"/><path d="M4 4l5 5M9 4l-5 5" stroke="#333" stroke-width="1.400"/></svg>
<div style="left:1901px;top:416px;width:14px;height:318px;background:#3c3c3c;border-left:1px solid #333"></div>
<i style="left:1904px;top:421px;width:0;height:0;border-bottom:6px solid #5a5a5a;border-left:4.500px solid transparent;border-right:4.500px solid transparent"></i>
<i style="left:1904px;top:719px;width:0;height:0;border-top:6px solid #5a5a5a;border-left:4.500px solid transparent;border-right:4.500px solid transparent"></i>
<div style="left:1714px;top:518px;width:187px;height:17px;background:#555"></div>
<div style="left:1763px;top:519px;width:43px;height:15px;background:#cfcfcf"></div>
<i class="dn s" style="left:1718px;top:421px"></i><span class="lbl tr" style="left:1730px;top:418px">* Animation Presets</span>
<i class="dn s" style="left:1735px;top:438px"></i><svg style="left:1746px;top:436px" width="15" height="12" viewBox="0 0 15 12"><path d="M.500 1.500h5l1.500 1.500h7v8.500h-13.500z" fill="#bdbdbd"/></svg><span class="lbl tr" style="left:1766px;top:435px">Image - Utilities</span>
<svg style="left:1767px;top:452px" width="13" height="32" viewBox="0 0 13 32"><g id="pf"><path d="M1 1h7l4 4v9.500h-11z" fill="#d0d0d0"/><path d="M8 1v4h4" fill="#888"/><path d="M3 12l2-4 2 2 2-3 2 5z" fill="#444"/></g><use href="#pf" y="17"/></svg>
<span class="lbl tr" style="left:1783px;top:452px">Levels ...uter to video</span>
<span class="lbl tr" style="left:1783px;top:469px">Levels ... to computer</span>
<i class="dn s" style="left:1718px;top:489px"></i><span class="lbl tr" style="left:1729px;top:486px">Color Correction</span>
<svg style="left:1746px;top:503px" width="16" height="48" viewBox="0 0 16 48"><g id="ef"><path d="M1 12V4l2-2.500h2.500l2.500 3 2.500-3h2.500l2 2.500v8h-3.500V8.500h-2v3.500h-3V8.500h-2v3.500z" fill="#c4c4c4"/></g><use href="#ef" y="17"/><use href="#ef" y="34"/></svg>
<span class="lbl tr" style="left:1765px;top:503px">Auto Levels</span>
<span class="lbl tr" style="left:1765px;top:520px;color:#1e1e1e">Levels</span>
<span class="lbl tr" style="left:1765px;top:537px">Levels ...vidual Controls)</span>
<div style="left:1714px;top:734px;width:206px;height:1px;background:#303030"></div>
<svg style="left:1881px;top:736px" width="14" height="13" viewBox="0 0 14 13"><rect x="1" y="1" width="11" height="11" fill="#d8d8d8"/><path d="M3.500 6h6v4.500h-6z" fill="#555"/><path d="M6 3.500h4.500v4" stroke="#555" fill="none"/></svg>

<!-- TIMELINE -->
<div style="left:0;top:755px;width:1920px;height:305px;background:#424242;border-top:1px solid #2a2a2a"></div>
<div class="tabrow" style="left:0;top:756px;width:1920px;height:19px;background:linear-gradient(#383838,#2f2f2f);border-bottom:1px solid #262626"></div>
<div style="left:13px;top:761px;width:10px;height:10px;background:#b39b77"></div><span class="lbl" style="left:27px;top:759px;font-size:11px;color:#5c5c5c">056</span>
<div style="left:61px;top:757px;width:1px;height:18px;background:#262626"></div>
<div style="left:73px;top:761px;width:10px;height:10px;background:#b39b77"></div><span class="lbl" style="left:88px;top:759px;font-size:11px;color:#5c5c5c">text</span>
<svg class="pm" style="left:1886px;top:760px" width="16" height="10" viewBox="0 0 16 10"><path d="M0 3h5l-2.500 3z" fill="#cfcfcf"/><rect x="6" y="0.500" width="9" height="8.500" fill="#8a8a8a"/><path d="M6 3h9M6 6h9" stroke="#555" stroke-width="1"/></svg>
<div style="left:1907px;top:757px;width:1px;height:18px;background:#252525"></div>
<span style="left:12px;top:777px;font-family:'Liberation Serif',serif;font-weight:bold;font-size:18px;color:#c4900f;letter-spacing:.45px;white-space:nowrap">0:00:01:08</span>
<span class="lbl" style="left:15px;top:797px;font-size:9.500px;color:#a57c14">00038 (30.00 fps)</span>
<!-- column header -->
<div style="left:0;top:813px;width:713px;height:16px;background:#3b3b3b;border-top:1px solid #2e2e2e;border-bottom:1px solid #2e2e2e"></div>
<svg style="left:0;top:813px" width="110" height="16" viewBox="0 0 110 16">
<path d="M8 8c2-3 6-3 8 0-2 3-6 3-8 0z" fill="#c8c8c8"/><circle cx="12" cy="8" r="1.600" fill="#333"/>
<path d="M21 6.500h3l3.500-3v9l-3.500-3h-3z" fill="#c8c8c8"/><path d="M29.500 5a4 4 0 0 1 0 6M31.500 3.500a6 6 0 0 1 0 9" fill="none" stroke="#aaa" stroke-width="1"/>
<circle cx="43" cy="8" r="3.600" fill="#cfcfcf"/>
<path d="M55 8V5.500a2.500 2.500 0 0 1 5 0V8" fill="none" stroke="#cfcfcf" stroke-width="1.500"/><rect x="53.500" y="7.500" width="8" height="6" fill="#cfcfcf"/>
<path d="M84 9l8-6.500 5 1 .5 4.500-8 6z" fill="#cfcfcf"/><circle cx="94" cy="5.500" r="1.200" fill="#333"/>
</svg>
<div style="left:68px;top:815px;width:1px;height:12px;background:#2b2b2b"></div>

<div style="left:0;top:831px;width:713px;height:17px;background:#474747"></div>
<svg style="left:6px;top:832px" width="100" height="15" viewBox="0 0 100 15"><path d="M2.500 6c2-3 6-3 8 0-2 3-6 3-8 0z" fill="#c8c8c8"/><circle cx="6.500" cy="6" r="1.500" fill="#333"/><path d="M1 12.500h11M32 12.500h11M46 12.500h11" stroke="#5a5a5a"/><circle cx="37" cy="6" r="3.400" fill="#cfcfcf"/><path d="M68 2l6 4.500-6 4.500z" fill="#8f8f8f"/><rect x="82" y="2" width="10" height="10" fill="#8fc4bb"/></svg>
<div class="dd" style="left:600px;top:832px;width:92px;height:14px"></div><i class="dn" style="left:679px;top:836px;border-top-color:#c0c0c0"></i>
<div style="left:0;top:848px;width:713px;height:17px;background:#424242"></div>
<svg style="left:6px;top:849px" width="100" height="15" viewBox="0 0 100 15"><path d="M2.500 6c2-3 6-3 8 0-2 3-6 3-8 0z" fill="#6e6e6e"/><circle cx="6.500" cy="6" r="1.500" fill="#333"/><path d="M1 12.500h11M32 12.500h11M46 12.500h11" stroke="#5a5a5a"/><path d="M66 3.500h9l-4.500 6z" fill="#9a9a9a"/><rect x="82" y="2" width="10" height="10" fill="#8fc4bb"/></svg>
<div class="dd" style="left:600px;top:849px;width:92px;height:14px"></div><i class="dn" style="left:679px;top:853px;border-top-color:#c0c0c0"></i>
<div style="left:0;top:899px;width:713px;height:17px;background:#474747"></div>
<svg style="left:6px;top:900px" width="100" height="15" viewBox="0 0 100 15"><path d="M2.500 6c2-3 6-3 8 0-2 3-6 3-8 0z" fill="#6e6e6e"/><circle cx="6.500" cy="6" r="1.500" fill="#333"/><path d="M1 12.500h11M32 12.500h11M46 12.500h11" stroke="#5a5a5a"/><path d="M68 2l6 4.500-6 4.500z" fill="#8f8f8f"/><rect x="82" y="2" width="10" height="10" fill="#8fc4bb"/></svg>
<div class="dd" style="left:600px;top:900px;width:92px;height:14px"></div><i class="dn" style="left:679px;top:904px;border-top-color:#c0c0c0"></i>
<div style="left:0;top:916px;width:713px;height:17px;background:#424242"></div>
<svg style="left:6px;top:917px" width="100" height="15" viewBox="0 0 100 15"><path d="M2.500 6c2-3 6-3 8 0-2 3-6 3-8 0z" fill="#6e6e6e"/><circle cx="6.500" cy="6" r="1.500" fill="#333"/><path d="M1 12.500h11M32 12.500h11M46 12.500h11" stroke="#5a5a5a"/><path d="M68 2l6 4.500-6 4.500z" fill="#8f8f8f"/><rect x="82" y="2" width="10" height="10" fill="#8fc4bb"/></svg>
<div class="dd" style="left:600px;top:917px;width:92px;height:14px"></div><i class="dn" style="left:679px;top:921px;border-top-color:#c0c0c0"></i>
<div style="left:0;top:865px;width:713px;height:34px;background:#3d3d3d"></div><i class="rt" style="left:92px;top:868px;border-left-color:#7a7a7a"></i>
<svg style="left:630px;top:783px" width="72" height="22" viewBox="630 783 72 22">
<ellipse cx="636" cy="793" rx="9" ry="6" fill="#cfcfcf"/><circle cx="633" cy="792" r="2" fill="#fff"/>
<circle cx="661" cy="796" r="5.200" fill="#5a5a5a" stroke="#a8a8a8" stroke-width="1.500"/><path d="M658 788h6M661 788v3M665.500 790l1.500 1.500" stroke="#a8a8a8" stroke-width="1.400"/>
<path d="M680 799v-9l3-3 3 3v2h11v7z" fill="none" stroke="#bdbdbd" stroke-width="1.300"/><path d="M683 796l4-3 4 4 5-5" fill="none" stroke="#bdbdbd" stroke-width="1.200"/><path d="M680 800.500h18" stroke="#bdbdbd"/>
</svg>
<div style="left:630px;top:814px;width:70px;height:14px;background:#3a3a3a;border:1px solid #2c2c2c"></div>

<div style="left:712px;top:776px;width:1190px;height:264px;background:#4f4f4f;border-left:1px solid #2c2c2c"></div>
<div style="left:713px;top:776px;width:1189px;height:36px;background:#3f3f3f"></div>
<div style="left:714px;top:782px;width:1182px;height:8px;background:linear-gradient(#8d8d8d,#7f7f7f);border-bottom:1px solid #2f2f2f"></div>
<div style="left:713px;top:781px;width:6px;height:10px;background:#c48b12;border:1px solid #6b4a08;border-radius:2px 0 0 2px"></div>
<div style="left:1892px;top:781px;width:6px;height:10px;background:#c48b12;border:1px solid #6b4a08;border-radius:0 2px 2px 0"></div>
<div style="left:713px;top:811px;width:1189px;height:16px;background:linear-gradient(#7c7c7c,#727272);border-top:1px solid #333;border-bottom:1px solid #2e2e2e"></div>
<div style="left:713px;top:812px;width:5px;height:14px;background:#c48b12;border:1px solid #6b4a08"></div>
<div style="left:1891px;top:812px;width:5px;height:14px;background:#c48b12;border:1px solid #6b4a08"></div>

<span class="lbl" style="left:714.2px;top:793px;font-size:10px;letter-spacing:-.6px;color:#c2c2c2">0:00f</span><div style="left:722px;top:805px;width:1px;height:4px;background:#9a9a9a"></div>
<span class="lbl" style="left:783.4px;top:793px;font-size:10px;letter-spacing:-.6px;color:#c2c2c2">05f</span><div style="left:789px;top:805px;width:1px;height:4px;background:#9a9a9a"></div>
<span class="lbl" style="left:854.4px;top:793px;font-size:10px;letter-spacing:-.6px;color:#c2c2c2">10f</span><div style="left:860px;top:805px;width:1px;height:4px;background:#9a9a9a"></div>
<span class="lbl" style="left:925.4px;top:793px;font-size:10px;letter-spacing:-.6px;color:#c2c2c2">15f</span><div style="left:931px;top:805px;width:1px;height:4px;background:#9a9a9a"></div>
<span class="lbl" style="left:996.4px;top:793px;font-size:10px;letter-spacing:-.6px;color:#c2c2c2">20f</span><div style="left:1002px;top:805px;width:1px;height:4px;background:#9a9a9a"></div>
<span class="lbl" style="left:1066.4px;top:793px;font-size:10px;letter-spacing:-.6px;color:#c2c2c2">25f</span><div style="left:1072px;top:805px;width:1px;height:4px;background:#9a9a9a"></div>
<span class="lbl" style="left:1129.6px;top:793px;font-size:10px;letter-spacing:-.6px;color:#c2c2c2">01:00f</span><div style="left:1143px;top:805px;width:1px;height:4px;background:#9a9a9a"></div>
<span class="lbl" style="left:1208.4px;top:793px;font-size:10px;letter-spacing:-.6px;color:#c2c2c2">05f</span><div style="left:1214px;top:805px;width:1px;height:4px;background:#9a9a9a"></div>
<span class="lbl" style="left:1279.4px;top:793px;font-size:10px;letter-spacing:-.6px;color:#c2c2c2">10f</span><div style="left:1285px;top:805px;width:1px;height:4px;background:#9a9a9a"></div>
<span class="lbl" style="left:1350.4px;top:793px;font-size:10px;letter-spacing:-.6px;color:#c2c2c2">15f</span><div style="left:1356px;top:805px;width:1px;height:4px;background:#9a9a9a"></div>
<span class="lbl" style="left:1421.4px;top:793px;font-size:10px;letter-spacing:-.6px;color:#c2c2c2">20f</span><div style="left:1427px;top:805px;width:1px;height:4px;background:#9a9a9a"></div>
<span class="lbl" style="left:1491.4px;top:793px;font-size:10px;letter-spacing:-.6px;color:#c2c2c2">25f</span><div style="left:1497px;top:805px;width:1px;height:4px;background:#9a9a9a"></div>
<span class="lbl" style="left:1553.6px;top:793px;font-size:10px;letter-spacing:-.6px;color:#c2c2c2">02:00f</span><div style="left:1567px;top:805px;width:1px;height:4px;background:#9a9a9a"></div>
<span class="lbl" style="left:1632.4px;top:793px;font-size:10px;letter-spacing:-.6px;color:#c2c2c2">05f</span><div style="left:1638px;top:805px;width:1px;height:4px;background:#9a9a9a"></div>
<span class="lbl" style="left:1703.4px;top:793px;font-size:10px;letter-spacing:-.6px;color:#c2c2c2">10f</span><div style="left:1709px;top:805px;width:1px;height:4px;background:#9a9a9a"></div>
<span class="lbl" style="left:1774.4px;top:793px;font-size:10px;letter-spacing:-.6px;color:#c2c2c2">15f</span><div style="left:1780px;top:805px;width:1px;height:4px;background:#9a9a9a"></div>
<span class="lbl" style="left:1845.4px;top:793px;font-size:10px;letter-spacing:-.6px;color:#c2c2c2">20f</span><div style="left:1851px;top:805px;width:1px;height:4px;background:#9a9a9a"></div>
<div style="left:720px;top:831px;width:1174px;height:15px;background:linear-gradient(#b2cfd1,#a6c4c6);border-bottom:1px solid #5f7a7b"></div>
<div style="left:720px;top:848px;width:1174px;height:16px;background:linear-gradient(#8dabac,#7f9e9f);border-bottom:1px solid #5f7a7b"></div>
<div style="left:720px;top:899px;width:1174px;height:16px;background:linear-gradient(#82a1a1,#7a9999);border-bottom:1px solid #5f7a7b"></div>
<div style="left:720px;top:916px;width:1174px;height:16px;background:linear-gradient(#93b3b3,#88a8a8);border-bottom:1px solid #5f7a7b"></div>
<div style="left:713px;top:865px;width:1189px;height:34px;background:#4a4a4a"></div><div style="left:713px;top:881px;width:1189px;height:1px;background:#424242"></div>
<div style="left:1258px;top:827px;width:13px;height:213px;background:rgba(150,150,150,.38)"></div>
<div style="left:1257px;top:782px;width:1px;height:258px;background:#c23a34"></div>
<div style="left:1258px;top:827px;width:14px;height:2px;background:#2f9a3a"></div>
<svg style="left:1250px;top:793px" width="15" height="16" viewBox="0 0 15 16"><path d="M2 2.500h11v6l-5.500 6.500L2 8.500z" fill="#d9a316" stroke="#7a5608" stroke-width="1"/><path d="M5.500 5.500h4l-2 4z" fill="#8a6208"/></svg>
<svg style="left:1252px;top:866px" width="11" height="32" viewBox="0 0 11 32" stroke="#e6dada" stroke-width="1.500"><path d="M2.500 1.500h6M5.500 1.500v11M2.500 12.500h6M2.500 18.500h6M5.500 18.500v11M2.500 29.500h6"/></svg>

<div style="left:1902px;top:776px;width:18px;height:264px;background:#3d3d3d;border-left:1px solid #2c2c2c"></div>
<i style="left:1904px;top:1028px;width:0;height:0;border-top:6px solid #626262;border-left:5px solid transparent;border-right:5px solid transparent"></i><svg style="left:1903px;top:808px" width="17" height="160" viewBox="0 0 17 160"><path d="M2 4h11v7l-5.500 5.500L2 11z" fill="#8c8c8c"/><rect x="3" y="26" width="10" height="8" fill="none" stroke="#aaa"/><circle cx="6" cy="29" r="2" fill="#aaa"/><path d="M3 52h10l-5-6z" fill="#5c5c5c"/></svg>

<div style="left:0;top:1040px;width:1920px;height:20px;background:#3e3e3e;border-top:1px solid #2b2b2b"></div>
<svg style="left:4px;top:1043px" width="56" height="16" viewBox="0 0 56 16"><rect x="2" y="2" width="9" height="8" fill="#bdbdbd"/><rect x="5" y="5" width="9" height="8" fill="#8f8f8f" stroke="#d0d0d0"/><circle cx="27" cy="8" r="5.500" fill="#2e2e2e" stroke="#bdbdbd" stroke-width="1.300"/><path d="M24.500 10l5-4.500" stroke="#bdbdbd" stroke-width="1.500"/><path d="M43 2c-2 0-2 2.500-2 3s-1.500 1-1.500 3 1.500 2 1.500 3 0 3 2 3M48 2c2 0 2 2.500 2 3s1.500 1 1.500 3-1.500 2-1.500 3 0 3-2 3" fill="none" stroke="#bdbdbd" stroke-width="1.400"/></svg>
<div style="left:418px;top:1043px;width:160px;height:14px;background:#3a3a3a;border:1px solid #2b2b2b;box-shadow:0 1px 0 #4d4d4d"></div>
<span class="lbl" style="left:440px;top:1044px;font-size:10px;color:#8d8d8d">Toggle Switches / Modes</span>
<svg style="left:714px;top:1042px" width="125" height="16" viewBox="0 0 125 16"><path d="M4 11l4-4 4 4z" fill="#8f8f8f"/><rect x="27" y="7" width="44" height="3" rx="1.500" fill="#222"/><circle cx="30" cy="8.500" r="3.200" fill="#5a5a5a" stroke="#222"/><path d="M80 13l5-7 3 3 3-5 6 9z" fill="#bdbdbd"/><path d="M120 3v10l-6-5z" fill="#777"/></svg>
<div style="left:820px;top:1041px;width:1px;height:19px;background:#2b2b2b"></div>

<div id="mainmenu">
<div class="gutter"></div>
<div class="chk"><svg width="20" height="20" viewBox="0 0 20 20"><path d="M6.2 9.6 L8.8 13.2 L13.4 4.6" fill="none" stroke="#1a1a8c" stroke-width="1.9" stroke-linecap="round" stroke-linejoin="round"/></svg></div>
<div class="mi" style="top:123px"><span>Effect Controls</span><span class="sc">F3</span></div>
<div class="mi" style="top:145px"><span>Curves</span><span class="sc">Ctrl+Alt+Shift+E</span></div>
<div class="mi" style="top:167px"><span>Remove All</span><span class="sc">Ctrl+Shift+E</span></div>
<div class="sep"></div>
<div class="mi" style="top:197px"><span>3D Channel</span><i class="ar"></i></div>
<div class="mi" style="top:219px"><span>Audio</span><i class="ar"></i></div>
<div class="mi" style="top:241px"><span>Blur &amp; Sharpen</span><i class="ar"></i></div>
<div class="mi" style="top:263px"><span>Channel</span><i class="ar"></i></div>
<div class="mi" style="top:285px"><span>CINEMA 4D</span><i class="ar"></i></div>
<div class="mi hl" style="top:307px"><span>Color Correction</span><i class="ar"></i></div>
<div class="mi" style="top:329px"><span>Distort</span><i class="ar"></i></div>
<div class="mi" style="top:351px"><span>Expression Controls</span><i class="ar"></i></div>
<div class="mi" style="top:373px"><span>Frischluft</span><i class="ar"></i></div>
<div class="mi" style="top:395px"><span>Generate</span><i class="ar"></i></div>
<div class="mi" style="top:417px"><span>Key Correct</span><i class="ar"></i></div>
<div class="mi" style="top:439px"><span>Keying</span><i class="ar"></i></div>
<div class="mi" style="top:461px"><span>Matte</span><i class="ar"></i></div>
<div class="mi" style="top:483px"><span>minning.de Normality</span><i class="ar"></i></div>
<div class="mi" style="top:505px"><span>Noise &amp; Grain</span><i class="ar"></i></div>
<div class="mi" style="top:527px"><span>Obsolete</span><i class="ar"></i></div>
<div class="mi" style="top:549px"><span>Perspective</span><i class="ar"></i></div>
<div class="mi" style="top:571px"><span>Primatte</span><i class="ar"></i></div>
<div class="mi" style="top:593px"><span>RE:Vision Plug-ins</span><i class="ar"></i></div>
<div class="mi" style="top:615px"><span>Red Giant</span><i class="ar"></i></div>
<div class="mi" style="top:637px"><span>Red Giant Warp</span><i class="ar"></i></div>
<div class="mi" style="top:659px"><span>Sapphire Adjust</span><i class="ar"></i></div>
<div class="mi" style="top:681px"><span>Sapphire Blur+Sharpen</span><i class="ar"></i></div>
<div class="mi" style="top:703px"><span>Sapphire Composite</span><i class="ar"></i></div>
<div class="mi" style="top:725px"><span>Sapphire Distort</span><i class="ar"></i></div>
<div class="mi" style="top:747px"><span>Sapphire Lighting</span><i class="ar"></i></div>
<div class="mi" style="top:769px"><span>Sapphire Render</span><i class="ar"></i></div>
<div class="mi" style="top:791px"><span>Sapphire Stylize</span><i class="ar"></i></div>
<div class="mi" style="top:813px"><span>Sapphire Time</span><i class="ar"></i></div>
<div class="mi" style="top:835px"><span>Sapphire Transitions</span><i class="ar"></i></div>
<div class="mi" style="top:857px"><span>Simulation</span><i class="ar"></i></div>
<div class="mi" style="top:879px"><span>Stylize</span><i class="ar"></i></div>
<div class="mi" style="top:901px"><span>Synthetic Aperture</span><i class="ar"></i></div>
<div class="mi" style="top:923px"><span>Text</span><i class="ar"></i></div>
<div class="mi" style="top:945px"><span>Time</span><i class="ar"></i></div>
<div class="mi" style="top:967px"><span>Transition</span><i class="ar"></i></div>
<div class="mi" style="top:989px"><span>Trapcode</span><i class="ar"></i></div>
<div class="mi" style="top:1011px"><span>Utility</span><i class="ar"></i></div>
<div class="mi" style="top:1033px"><span>Video Copilot</span><i class="ar"></i></div>
</div>
<div id="submenu">
<div class="gutter2"></div>
<div class="si" style="top:307px">Auto Color</div>
<div class="si" style="top:329px">Auto Contrast</div>
<div class="si" style="top:351px">Auto Levels</div>
<div class="si" style="top:373px">Black &amp; White</div>
<div class="si" style="top:395px">Brightness &amp; Contrast</div>
<div class="si" style="top:417px">Broadcast Colors</div>
<div class="si" style="top:439px">CC Color Neutralizer</div>
<div class="si" style="top:461px">CC Color Offset</div>
<div class="si" style="top:483px">CC Kernel</div>
<div class="si" style="top:505px">CC Toner</div>
<div class="si" style="top:527px">Change Color</div>
<div class="si" style="top:549px">Change to Color</div>
<div class="si" style="top:571px">Channel Mixer</div>
<div class="si" style="top:593px">Color Balance</div>
<div class="si" style="top:615px">Color Balance (HLS)</div>
<div class="si" style="top:637px">Color Link</div>
<div class="si" style="top:659px">Color Stabilizer</div>
<div class="si" style="top:681px">Colorama</div>
<div class="si" style="top:703px">Curves</div>
<div class="si" style="top:725px">Equalize</div>
<div class="si" style="top:747px">Exposure</div>
<div class="si" style="top:769px">Gamma/Pedestal/Gain</div>
<div class="si" style="top:791px">Hue/Saturation</div>
<div class="si" style="top:813px">Leave Color</div>
<div class="si" style="top:835px">Levels</div>
<div class="si" style="top:857px">Levels (Individual Controls)</div>
<div class="si" style="top:879px">Photo Filter</div>
<div class="si" style="top:901px">PS Arbitrary Map</div>
<div class="si" style="top:923px">Selective Color</div>
<div class="si" style="top:945px">Shadow/Highlight</div>
<div class="si" style="top:967px">Tint</div>
<div class="si" style="top:989px">Tritone</div>
<div class="si" style="top:1011px">Vibrance</div>
</div>
<div style="left:0;top:1060px;width:1920px;height:20px;background:#000"></div>
<svg style="left:340px;top:312px" width="24" height="30" viewBox="340 312 24 30"><path d="M345.500 318 L345.500 333.800 L349.200 330.600 L351.800 336.400 L354.200 335.300 L351.600 329.700 L356.800 329.500 Z" fill="#fff" stroke="#2b2b33" stroke-width="1.300" stroke-linejoin="round"/></svg>
<!-- watermark -->
<svg style="left:1700px;top:1015px;opacity:.88" width="220" height="62" viewBox="1700 1015 220 62">
<defs><radialGradient id="fx1" cx=".45" cy=".4" r=".6"><stop offset="0" stop-color="#f3f0ea"/><stop offset="1" stop-color="#b9aaa0"/></radialGradient><filter id="wbl"><feGaussianBlur stdDeviation=".7"/></filter></defs>
<g filter="url(#wbl)">
<path d="M1737 1058h9l2 12h-14z" fill="#6d6a66"/><path d="M1734 1052h11l-1 8h-9z" fill="#8a4a2a"/>
<path d="M1716 1030l7 3 9-3 8-8 3 10 5 4-2 8h-29z" fill="#b8572f"/>
<path d="M1714 1029l6 5-5 3z" fill="#8c8fa8"/><path d="M1740 1022l4 9-7 1z" fill="#d98b5d"/>
<circle cx="1729.500" cy="1047" r="12.500" fill="url(#fx1)" stroke="#a85a38" stroke-width="1.200"/>
<path d="M1716 1040q14-8 29 0" fill="none" stroke="#b8572f" stroke-width="5"/>
<ellipse cx="1728" cy="1036" rx="5" ry="2" fill="#9fb0bf"/>
<path d="M1746 1052q6-6 10-3" fill="none" stroke="#b8896a" stroke-width="1.500"/>
<text x="1755" y="1060" font-family="Liberation Serif" font-style="italic" font-weight="bold" font-size="37" textLength="156" lengthAdjust="spacingAndGlyphs" fill="#9c4a38" fill-opacity=".75" stroke="#cf9a80" stroke-width="1.300" paint-order="stroke">PooShock.Ru</text>
</g>
</svg>
</div></body></html>
